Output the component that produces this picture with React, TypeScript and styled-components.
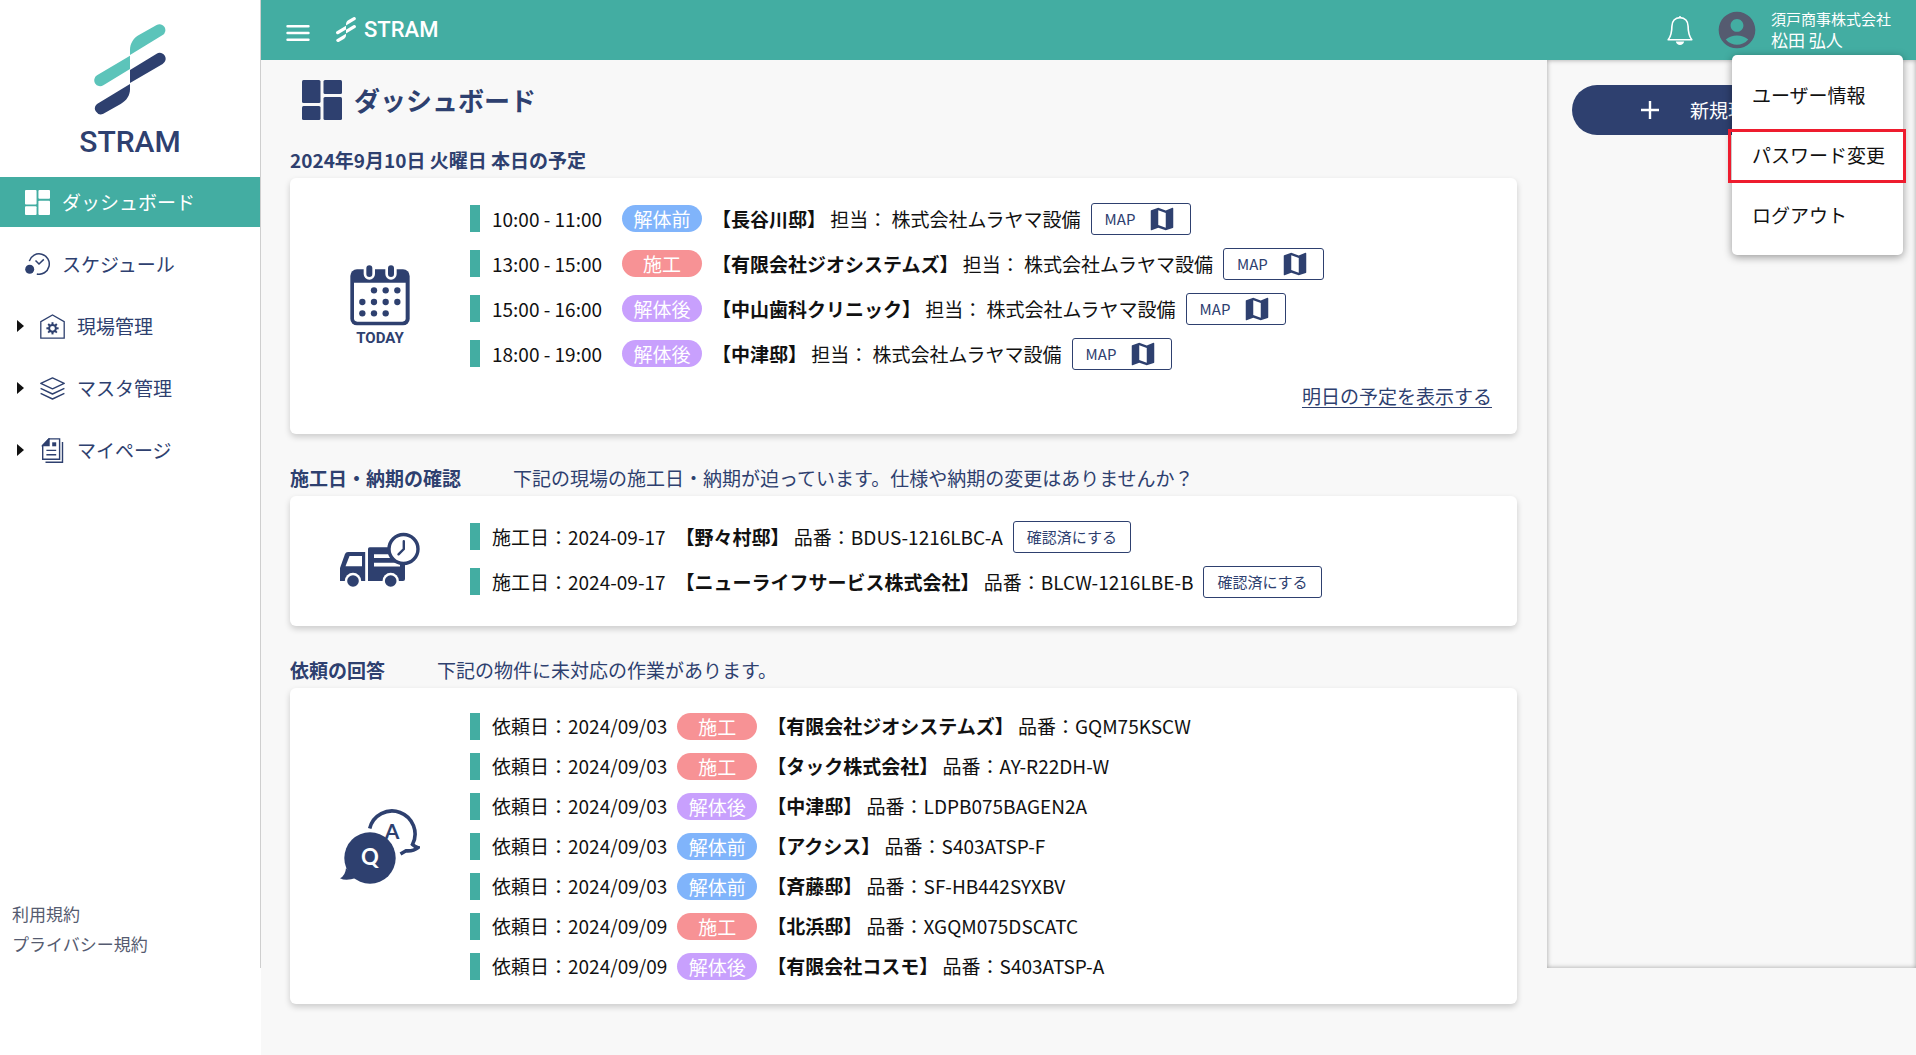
import React from "react";
import styled, { createGlobalStyle } from "styled-components";
import { MdAccountCircle, MdMap } from "react-icons/md";

const color = {
  teal: "#43ada2",
  tealLight: "#5cc4ba",
  navy: "#2e406f",
  text: "#111111",
  page: "#f8f8f8",
  blue: "#80b4fb",
  red: "#f79295",
  purple: "#c8a0fd",
  slate: "#555b70",
};

const GlobalStyle = createGlobalStyle`
  *, *::before, *::after { box-sizing: border-box; }
  body {
    margin: 0;
    background: ${color.page};
    color: ${color.text};
    font-family: "Noto Sans CJK JP", "Noto Sans", sans-serif;
    font-size: 19px;
    line-height: 28px;
  }
  ul { list-style: none; margin: 0; padding: 0; }
  h1, h2, p { margin: 0; }
  button { font: inherit; cursor: pointer; }
  svg { display: block; flex: none; }
`;

const Page = styled.div`
  display: flex;
  min-height: 100vh;
`;

const Sidebar = styled.div`
  flex: none;
  width: 261px;
  background: #fff;
`;

const SidebarInner = styled.nav`
  display: flex;
  flex-direction: column;
  height: calc(100vh - 87px);
  border-right: 1px solid #cfcfcf;
`;

const Brand = styled.a`
  display: flex;
  flex-direction: column;
  align-items: center;
  gap: 10px;
  height: 177px;
  padding-top: 24px;
  color: ${color.navy};
  font: 500 30px/34px Roboto, sans-serif;
  text-decoration: none;
`;

const NavList = styled.ul`
  display: flex;
  flex-direction: column;
  gap: 12px;
`;

const NavLink = styled.a<{ $active?: boolean; $nested?: boolean }>`
  display: flex;
  align-items: center;
  gap: 12px;
  height: 50px;
  padding-left: ${(p) => (p.$nested ? 17 : 25)}px;
  color: ${(p) => (p.$active ? "#fff" : color.navy)};
  background: ${(p) => (p.$active ? color.teal : "transparent")};
  text-decoration: none;
`;

const Caret = styled.span`
  width: 0;
  margin-right: 4px;
  border-left: 7px solid #111;
  border-top: 6px solid transparent;
  border-bottom: 6px solid transparent;
`;

const LegalLinks = styled.div`
  display: flex;
  flex-direction: column;
  gap: 2px;
  margin-top: auto;
  padding: 0 12px 10px;
  font-size: 17px;

  a {
    color: ${color.slate};
    text-decoration: none;
  }
`;

const Content = styled.div`
  flex: 1;
  min-width: 0;
  display: flex;
  flex-direction: column;
`;

const Header = styled.header`
  position: relative;
  display: flex;
  align-items: center;
  height: 60px;
  padding: 0 25px 0 24px;
  color: #fff;
  background: ${color.teal};
`;

const IconButton = styled.button`
  display: flex;
  padding: 0;
  border: 0;
  color: inherit;
  background: none;
`;

const MenuToggle = styled(IconButton)`
  padding-top: 6px;
`;

const HeaderBrand = styled.a`
  display: flex;
  align-items: center;
  gap: 8px;
  margin-left: 26px;
  color: #fff;
  font: 500 22px/24px Roboto, sans-serif;
  text-decoration: none;
`;

const HeaderTools = styled.div`
  display: flex;
  align-items: center;
  gap: 22px;
  margin-left: auto;
`;

const UserButton = styled.button`
  display: flex;
  align-items: center;
  gap: 12px;
  padding: 0;
  border: 0;
  color: #fff;
  background: none;
  text-align: left;

  > svg { color: ${color.slate}; }
`;

const UserText = styled.span`
  display: flex;
  flex-direction: column;
  font-size: 17px;
  line-height: 22px;

  small { font-size: 15px; line-height: 20px; }
`;

const Menu = styled.ul`
  position: absolute;
  z-index: 2;
  top: 55px;
  right: 13px;
  width: 171px;
  padding: 10px 0;
  border-radius: 5px;
  background: #fff;
  box-shadow: 0 2px 8px rgba(0, 0, 0, 0.4);
`;

const MenuItem = styled.li`
  position: relative;
`;

const MenuButton = styled.button`
  width: 100%;
  height: 60px;
  padding: 0 0 0 20px;
  border: 0;
  color: ${color.text};
  background: none;
  text-align: left;
  white-space: nowrap;
`;

const Highlight = styled.span`
  position: absolute;
  inset: 4px -3px 2px -4px;
  border: 3px solid #ee1c2e;
  pointer-events: none;
`;

const Body = styled.div`
  flex: 1;
  display: flex;
  align-items: flex-start;
`;

const Main = styled.main`
  flex: 1;
  min-width: 0;
  padding: 20px 30px 50px 29px;
`;

const PageTitle = styled.h1`
  display: flex;
  align-items: center;
  gap: 12px;
  height: 40px;
  padding-left: 12px;
  margin-bottom: 26px;
  color: ${color.navy};
  font-size: 26px;
  font-weight: 700;
`;

const Section = styled.section`
  & + & { margin-top: 30px; }
`;

const SectionHeader = styled.div`
  display: flex;
  gap: 52px;
  margin-bottom: 4px;
  color: ${color.navy};

  h2 { font-size: 19px; font-weight: 700; }
`;

const Card = styled.div<{ $bottom?: number }>`
  display: flex;
  align-items: center;
  padding: 24px 0 ${(p) => p.$bottom ?? 24}px;
  border-radius: 6px;
  background: #fff;
  box-shadow: 0 3px 6px rgba(0, 0, 0, 0.18);
`;

const CardIcon = styled.div`
  flex: none;
  display: flex;
  flex-direction: column;
  align-items: center;
  gap: 3px;
  width: 180px;
  color: ${color.navy};
  font: 700 15px/18px Roboto, sans-serif;
`;

const CardBody = styled.div`
  flex: 1;
  display: flex;
  flex-direction: column;
`;

const Rows = styled.ul`
  display: flex;
  flex-direction: column;
  gap: 12px;
`;

const Row = styled.li<{ $height: number }>`
  display: flex;
  align-items: center;
  gap: 10px;
  height: ${(p) => p.$height}px;
  white-space: nowrap;

  &::before {
    content: "";
    width: 10px;
    height: 27px;
    margin-right: 2px;
    background: ${color.teal};
  }
`;

const TimeRange = styled.time`
  width: 120px;
`;

type Status = "解体前" | "施工" | "解体後";

const statusColor: Record<Status, string> = {
  解体前: color.blue,
  施工: color.red,
  解体後: color.purple,
};

const Pill = styled.span<{ $status: Status }>`
  width: 80px;
  height: 27px;
  border-radius: 14px;
  color: #fff;
  background: ${(p) => statusColor[p.$status]};
  line-height: 28px;
  text-align: center;
`;

const OutlineButton = styled.button`
  display: flex;
  align-items: center;
  gap: 12px;
  height: 32px;
  padding: 0 13px;
  border: 1px solid ${color.navy};
  border-radius: 3px;
  color: ${color.navy};
  background: #fff;
  font-size: 15px;
  line-height: 20px;
`;

const TomorrowLink = styled.a`
  align-self: flex-end;
  margin: 12px 25px 0 0;
  color: ${color.navy};
  text-underline-offset: 3px;
`;

const Aside = styled.aside`
  flex: none;
  width: 369px;
  height: calc(100vh - 147px);
  padding: 25px;
  box-shadow: inset 0 0 5px rgba(0, 0, 0, 0.35);
`;

const NewSiteButton = styled.button`
  display: flex;
  align-items: center;
  gap: 31px;
  width: 100%;
  height: 50px;
  padding: 0 0 0 69px;
  border: 0;
  border-radius: 25px;
  color: #fff;
  background: ${color.navy};
  white-space: nowrap;
`;

function LogoMark({ width, top, bottom }: { width: number; top: string; bottom: string }) {
  return (
    <svg width={width} viewBox="282 74 216 273" aria-hidden="true">
      <g fill={top}>
        <path d="M390 167V152C390 132 400 116 418 106L470 77A17.5 17.5 0 0 1 488 107Z" />
        <path d="M390 169V209L310 258A17.5 17.5 0 0 1 291 228Z" />
      </g>
      <g fill={bottom}>
        <path d="M390 212L470 163A17.5 17.5 0 0 1 488 194L390 251Z" />
        <path d="M390 254V270C390 288 380 304 362 314L310 343A17.5 17.5 0 0 1 291 314Z" />
      </g>
    </svg>
  );
}

function DashboardIcon({ size }: { size: number }) {
  return (
    <svg width={size} height={size} viewBox="0 0 40 40" fill="currentColor" aria-hidden="true">
      <rect width="18.5" height="23" rx="1.5" />
      <rect x="21.5" width="18.5" height="14" rx="1.5" />
      <rect y="26" width="18.5" height="14" rx="1.5" />
      <rect x="21.5" y="17" width="18.5" height="23" rx="1.5" />
    </svg>
  );
}

function ScheduleIcon() {
  return (
    <svg width="25" height="22" viewBox="0 0 25 22" fill="none" stroke="currentColor" strokeWidth="1.5" aria-hidden="true">
      <circle cx="4.7" cy="16.3" r="4.5" fill="currentColor" stroke="none" />
      <path d="M4.3 8.1A10.2 10.2 0 1 1 11.8 21" />
      <path d="M10.5 7.5L14 11L18.8 6.4" />
    </svg>
  );
}

function SiteIcon() {
  return (
    <svg width="25" height="25" viewBox="0 0 25 25" fill="none" stroke="currentColor" strokeWidth="1.3" aria-hidden="true">
      <path d="M.8 24.2V7.6L12.5.9L24.2 7.6V24.2Z" />
      <circle cx="12.5" cy="14.3" r="3.4" strokeWidth="2" />
      <g strokeWidth="2">
        {[0, 45, 90, 135, 180, 225, 270, 315].map((a) => (
          <path key={a} d="M12.5 10.6V8.2" transform={`rotate(${a} 12.5 14.3)`} />
        ))}
      </g>
    </svg>
  );
}

function LayersIcon() {
  return (
    <svg width="25" height="23" viewBox="0 0 25 23" fill="none" stroke="currentColor" strokeWidth="1.4" strokeLinejoin="round" aria-hidden="true">
      <path d="M12.5.9L24.2 6.4L12.5 11.9L.8 6.4Z" />
      <path d="M.6 11.3L12.5 17L24.4 11.3" />
      <path d="M.6 16.3L12.5 22L24.4 16.3" />
    </svg>
  );
}

function DocumentIcon() {
  return (
    <svg width="25" height="25" viewBox="0 0 25 25" fill="none" stroke="currentColor" strokeWidth="1.4" aria-hidden="true">
      <path d="M2.7 7.5L9 .9H19.6V21.3H2.7Z" />
      <path d="M2.7 7.5L9 .9V7.5Z" fill="currentColor" />
      <path d="M22.5 4V24.2H5.5" />
      <rect x="12.2" y="4.3" width="4" height="4" fill="currentColor" stroke="none" />
      <path d="M6.4 12.4H16.2M6.4 16.7H16.2" />
    </svg>
  );
}

function MenuIcon() {
  return (
    <svg width="25" height="18" viewBox="0 0 25 18" stroke="currentColor" strokeWidth="2.4" strokeLinecap="round" aria-hidden="true">
      <path d="M2.5 2.2H23.5M2.5 9H23.5M2.5 15.8H23.5" />
    </svg>
  );
}

function BellIcon() {
  return (
    <svg width="26" height="31" viewBox="0 0 26 31" fill="none" stroke="currentColor" strokeWidth="1.6" strokeLinejoin="round" aria-hidden="true">
      <path d="M13 1V3M13 2.6C8 2.6 4.9 6.3 4.9 11.2C4.9 18 4 21 1.2 24.8H24.8C22 21 21.1 18 21.1 11.2C21.1 6.3 18 2.6 13 2.6Z" />
      <path d="M8.8 26.6H17.2C16.6 28.9 15.2 30 13 30S9.4 28.9 8.8 26.6Z" fill="currentColor" stroke="none" />
    </svg>
  );
}

function CalendarIcon() {
  return (
    <svg width="60" height="61" viewBox="0 0 180 183" aria-hidden="true">
      <rect x="1" y="13" width="178" height="168" rx="20" fill="currentColor" />
      <path d="M12 53H167V160Q167 170 157 170H22Q12 170 12 160Z" fill="#fff" />
      {[58, 123].map((x) => (
        <rect key={x} x={x - 13} y="-3" width="26" height="43" rx="13" fill="currentColor" stroke="#fff" strokeWidth="8" />
      ))}
      {[
        [72, 76], [107, 76], [142, 76],
        [37, 111], [72, 111], [107, 111], [142, 111],
        [37, 145], [72, 145], [107, 145],
      ].map(([x, y]) => (
        <circle key={`${x}-${y}`} cx={x} cy={y} r="9.5" fill="currentColor" />
      ))}
    </svg>
  );
}

function TruckIcon() {
  return (
    <svg width="80" height="55" viewBox="0 0 80 55" fill="currentColor" aria-hidden="true">
      <path d="M0 49V36L5 22Q5.8 20 8 20H25.2V49Z" />
      <path d="M5.5 34.3L9.5 24H22V34.3Z" fill="#fff" />
      <path d="M28 49V17Q28 15.3 29.7 15.3H65V47Q65 49 63 49Z" />
      <path d="M34 22.3H52V26H34ZM34 30.8H60V34.5H34Z" fill="#fff" />
      <circle cx="13" cy="49" r="8.2" fill="#fff" />
      <circle cx="50.7" cy="49" r="8.2" fill="#fff" />
      <circle cx="13" cy="49" r="5.8" />
      <circle cx="50.7" cy="49" r="5.8" />
      <circle cx="63.5" cy="17" r="14.5" fill="#fff" stroke="currentColor" strokeWidth="3.4" />
      <path d="M63.8 9.3V17L58.5 22.3" fill="none" stroke="currentColor" strokeWidth="2.4" strokeLinecap="round" />
    </svg>
  );
}

function QuestionIcon() {
  return (
    <svg width="80" height="76" viewBox="0 0 80 76" fill="currentColor" fontFamily="Lato, sans-serif" fontWeight="700" textAnchor="middle" aria-hidden="true">
      <path d="M29.7 20.5A23 23 0 1 1 72.5 36.5Q74.5 38.5 78 39.6Q73.5 43.300 66 42.800L60.5 46" fill="none" stroke="currentColor" strokeWidth="3.6" />
      <text x="52" y="31" fontSize="21">A</text>
      <circle cx="30" cy="50" r="25.7" />
      <path d="M6 60Q5.5 67.5 0 70.3Q6 73.5 16 70Z" />
      <text x="30" y="57" fontSize="22" fill="#fff">Q</text>
    </svg>
  );
}

function PlusIcon() {
  return (
    <svg width="18" height="18" viewBox="0 0 18 18" stroke="currentColor" strokeWidth="2.4" aria-hidden="true">
      <path d="M9 0V18M0 9H18" />
    </svg>
  );
}

const nestedNav = [
  { label: "現場管理", icon: <SiteIcon /> },
  { label: "マスタ管理", icon: <LayersIcon /> },
  { label: "マイページ", icon: <DocumentIcon /> },
];

const schedule: { time: string; status: Status; name: string }[] = [
  { time: "10:00 - 11:00", status: "解体前", name: "【長谷川邸】" },
  { time: "13:00 - 15:00", status: "施工", name: "【有限会社ジオシステムズ】" },
  { time: "15:00 - 16:00", status: "解体後", name: "【中山歯科クリニック】" },
  { time: "18:00 - 19:00", status: "解体後", name: "【中津邸】" },
];

const deadlines = [
  { date: "2024-09-17", name: "【野々村邸】", code: "BDUS-1216LBC-A" },
  { date: "2024-09-17", name: "【ニューライフサービス株式会社】", code: "BLCW-1216LBE-B" },
];

const requests: { date: string; status: Status; name: string; code: string }[] = [
  { date: "2024/09/03", status: "施工", name: "【有限会社ジオシステムズ】", code: "GQM75KSCW" },
  { date: "2024/09/03", status: "施工", name: "【タック株式会社】", code: "AY-R22DH-W" },
  { date: "2024/09/03", status: "解体後", name: "【中津邸】", code: "LDPB075BAGEN2A" },
  { date: "2024/09/03", status: "解体前", name: "【アクシス】", code: "S403ATSP-F" },
  { date: "2024/09/03", status: "解体前", name: "【斉藤邸】", code: "SF-HB442SYXBV" },
  { date: "2024/09/09", status: "施工", name: "【北浜邸】", code: "XGQM075DSCATC" },
  { date: "2024/09/09", status: "解体後", name: "【有限会社コスモ】", code: "S403ATSP-A" },
];

export default function App() {
  return (
    <Page>
      <GlobalStyle />
      <Sidebar>
        <SidebarInner>
          <Brand href="#">
            <LogoMark width={72} top={color.tealLight} bottom={color.navy} />
            STRAM
          </Brand>
          <NavList>
            <li>
              <NavLink href="#" $active>
                <DashboardIcon size={25} />
                ダッシュボード
              </NavLink>
            </li>
            <li>
              <NavLink href="#">
                <ScheduleIcon />
                スケジュール
              </NavLink>
            </li>
            {nestedNav.map((item) => (
              <li key={item.label}>
                <NavLink href="#" $nested>
                  <Caret />
                  {item.icon}
                  {item.label}
                </NavLink>
              </li>
            ))}
          </NavList>
          <LegalLinks>
            <a href="#">利用規約</a>
            <a href="#">プライバシー規約</a>
          </LegalLinks>
        </SidebarInner>
      </Sidebar>

      <Content>
        <Header>
          <MenuToggle aria-label="メニュー">
            <MenuIcon />
          </MenuToggle>
          <HeaderBrand href="#">
            <LogoMark width={20} top="#fff" bottom="#fff" />
            STRAM
          </HeaderBrand>
          <HeaderTools>
            <IconButton aria-label="通知">
              <BellIcon />
            </IconButton>
            <UserButton aria-expanded="true">
              <MdAccountCircle size={44} />
              <UserText>
                <small>須戸商事株式会社</small>
                松田 弘人
              </UserText>
            </UserButton>
          </HeaderTools>
          <Menu>
            <MenuItem>
              <MenuButton>ユーザー情報</MenuButton>
            </MenuItem>
            <MenuItem>
              <MenuButton>パスワード変更</MenuButton>
              <Highlight />
            </MenuItem>
            <MenuItem>
              <MenuButton>ログアウト</MenuButton>
            </MenuItem>
          </Menu>
        </Header>

        <Body>
          <Main>
            <PageTitle>
              <DashboardIcon size={40} />
              ダッシュボード
            </PageTitle>

            <Section>
              <SectionHeader>
                <h2>2024年9月10日 火曜日 本日の予定</h2>
              </SectionHeader>
              <Card>
                <CardIcon>
                  <CalendarIcon />
                  TODAY
                </CardIcon>
                <CardBody>
                  <Rows>
                    {schedule.map((s) => (
                      <Row key={s.time} $height={33}>
                        <TimeRange>{s.time}</TimeRange>
                        <Pill $status={s.status}>{s.status}</Pill>
                        <span>
                          <b>{s.name}</b> 担当： 株式会社ムラヤマ設備
                        </span>
                        <OutlineButton>
                          MAP
                          <MdMap size={30} />
                        </OutlineButton>
                      </Row>
                    ))}
                  </Rows>
                  <TomorrowLink href="#">明日の予定を表示する</TomorrowLink>
                </CardBody>
              </Card>
            </Section>

            <Section>
              <SectionHeader>
                <h2>施工日・納期の確認</h2>
                <p>下記の現場の施工日・納期が迫っています。仕様や納期の変更はありませんか？</p>
              </SectionHeader>
              <Card $bottom={28}>
                <CardIcon>
                  <TruckIcon />
                </CardIcon>
                <CardBody>
                  <Rows>
                    {deadlines.map((d) => (
                      <Row key={d.code} $height={33}>
                        <span>施工日：{d.date}</span>
                        <span>
                          <b>{d.name}</b> 品番：{d.code}
                        </span>
                        <OutlineButton>確認済にする</OutlineButton>
                      </Row>
                    ))}
                  </Rows>
                </CardBody>
              </Card>
            </Section>

            <Section>
              <SectionHeader>
                <h2>依頼の回答</h2>
                <p>下記の物件に未対応の作業があります。</p>
              </SectionHeader>
              <Card>
                <CardIcon>
                  <QuestionIcon />
                </CardIcon>
                <CardBody>
                  <Rows>
                    {requests.map((r) => (
                      <Row key={r.code} $height={28}>
                        <span>依頼日：{r.date}</span>
                        <Pill $status={r.status}>{r.status}</Pill>
                        <span>
                          <b>{r.name}</b> 品番：{r.code}
                        </span>
                      </Row>
                    ))}
                  </Rows>
                </CardBody>
              </Card>
            </Section>
          </Main>

          <Aside>
            <NewSiteButton>
              <PlusIcon />
              新規現場を登録
            </NewSiteButton>
          </Aside>
        </Body>
      </Content>
    </Page>
  );
}
